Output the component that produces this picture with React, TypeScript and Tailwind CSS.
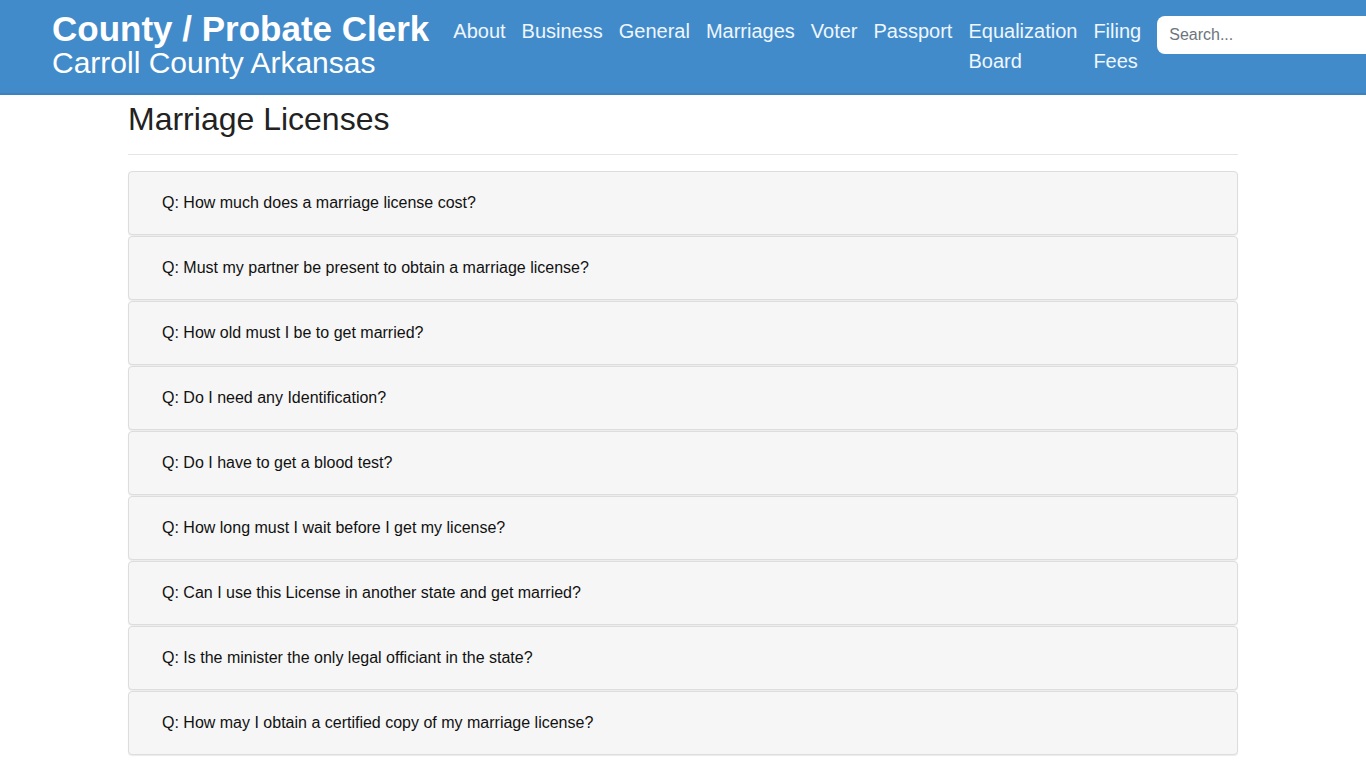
import React from 'react';

const navItems: React.ReactNode[] = [
  'About',
  'Business',
  'General',
  'Marriages',
  'Voter',
  'Passport',
  <>
    Equalization
    <br />
    Board
  </>,
  <>
    Filing
    <br />
    Fees
  </>,
];

const questions = [
  'Q: How much does a marriage license cost?',
  'Q: Must my partner be present to obtain a marriage license?',
  'Q: How old must I be to get married?',
  'Q: Do I need any Identification?',
  'Q: Do I have to get a blood test?',
  'Q: How long must I wait before I get my license?',
  'Q: Can I use this License in another state and get married?',
  'Q: Is the minister the only legal officiant in the state?',
  'Q: How may I obtain a certified copy of my marriage license?',
];

const Header: React.FC = () => {
  return (
    <header className="h-[95px] bg-[#428bca] border-b-2 border-[#3d82bf] flex items-start pl-[52px] overflow-hidden">
      <div className="pt-[10px] shrink-0 text-white">
        <div className="text-[35px] leading-[38px] font-bold">County / Probate Clerk</div>
        <div className="text-[30px] leading-[30px]">Carroll County Arkansas</div>
      </div>
      <nav className="flex gap-4 pt-[16px] ml-[24px] shrink-0">
        {navItems.map((item, i) => (
          <a key={i} href="#" className="text-[20px] leading-[30px] text-[#eef6ff] whitespace-nowrap">
            {item}
          </a>
        ))}
      </nav>
      <div className="ml-4 mt-[16px] shrink-0">
        <input
          type="text"
          placeholder="Search..."
          className="w-[280px] h-[38px] bg-white rounded-[8px] pl-[12px] text-[16px] text-[#333] placeholder:text-[#6c757d] outline-none"
        />
      </div>
    </header>
  );
};

export default function App() {
  return (
    <div className="min-h-screen bg-white font-['Liberation_Sans',Arial,sans-serif]">
      <Header />
      <main className="w-[1110px] mx-auto">
        <h1 className="mt-[7px] mb-[17px] text-[32px] leading-[35px] text-[#222]">Marriage Licenses</h1>
        <hr className="border-0 border-t border-[#e5e5e5] mb-[16px]" />
        <div className="flex flex-col gap-[1px]">
          {questions.map((q) => (
            <div
              key={q}
              className="h-[64px] flex items-center pl-[33px] bg-[#f6f6f6] border border-[#dddddd] rounded-[4px] shadow-[0_1px_1px_rgba(0,0,0,0.08)]"
            >
              <span className="text-[16px] text-[#111]">{q}</span>
            </div>
          ))}
        </div>
      </main>
    </div>
  );
}
